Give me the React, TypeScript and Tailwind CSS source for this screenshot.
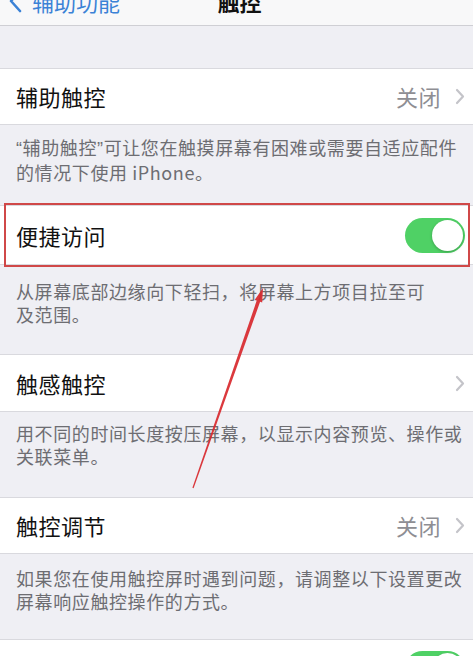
import React from 'react';

const FONT = { fontFamily: '"Noto Sans CJK SC", "Noto Sans", sans-serif' };

const Chevron = () => (
  <svg width="10" height="17" viewBox="0 0 10 17" className="ml-[14px]">
    <path d="M2 2 L8 8.5 L2 15" fill="none" stroke="#c4c4c9" strokeWidth="2.2" strokeLinecap="round" strokeLinejoin="round" />
  </svg>
);

const Toggle = () => (
  <div className="relative w-[60px] h-[35px] rounded-full bg-[#4fd165]">
    <div className="absolute right-[2px] top-[2px] w-[31px] h-[31px] rounded-full bg-white shadow-[0_1px_3px_rgba(0,0,0,0.25)]" />
  </div>
);

interface RowProps {
  label: string;
  value?: string;
  chevron?: boolean;
  toggle?: boolean;
  h?: string;
}

const Row: React.FC<RowProps> = ({ label, value, chevron, toggle, h = 'h-[57px]' }) => (
  <div className={`${h} bg-white border-y border-[#d9d9de] flex items-center pl-4 pr-[8px]`}>
    <span className="text-[22px] text-[#111] tracking-[0.5px] flex-1">{label}</span>
    {value && <span className="text-[22px] text-[#8e8e93] tracking-[0.5px]">{value}</span>}
    {chevron && <Chevron />}
    {toggle && <Toggle />}
  </div>
);

const Note: React.FC<{ lines: React.ReactNode[]; pt: string; h: string }> = ({ lines, pt, h }) => (
  <div className={`${h} ${pt} px-4 text-[18px] leading-[23px] text-[#6d6d72] tracking-[0.6px]`}>
    {lines.map((l, i) => (
      <div key={i} className="whitespace-nowrap">{l}</div>
    ))}
  </div>
);

const Q: React.FC<{ c: string }> = ({ c }) => (
  <span style={{ fontFamily: '"Liberation Sans", sans-serif' }}>{c}</span>
);

export default function App() {
  return (
    <div className="relative w-[473px] h-[656px] overflow-hidden bg-[#efeff4]" style={FONT}>
      {/* nav bar, cut at the top */}
      <div className="relative h-[26px] bg-[#f8f8f9] border-b border-[#cfcfd4] overflow-hidden">
        <div className="-mt-[14px] h-[30px] flex items-center pl-[8px]">
          <svg width="14" height="24" viewBox="0 0 14 24">
            <path d="M12 2 L3 12 L12 22" fill="none" stroke="#3b82d6" strokeWidth="2.6" strokeLinecap="round" strokeLinejoin="round" />
          </svg>
          <span className="ml-[10px] text-[22px] text-[#3b82d6]">辅助功能</span>
        </div>
        <div className="absolute left-0 right-0 -top-[14px] h-[30px] flex items-center justify-center">
          <span className="text-[22px] font-bold text-[#111] ml-[6px]">触控</span>
        </div>
      </div>

      <div className="h-[42px]" />

      <Row label="辅助触控" value="关闭" chevron />
      <Note
        h="h-[80px]"
        pt="pt-[11px]"
        lines={[
          <>
            <Q c="“" />辅助触控<Q c="”" />可让您在触摸屏幕有困难或需要自适应配件
          </>,
          '的情况下使用 iPhone。',
        ]}
      />

      <div className="relative">
        <Row label="便捷访问" toggle h="h-[60px]" />
        <div className="absolute -top-[2px] -bottom-[2px] left-[4px] right-[3px] border-2 border-[#d04848] pointer-events-none" />
      </div>
      <Note
        h="h-[89px]"
        pt="pt-[15px]"
        lines={['从屏幕底部边缘向下轻扫，将屏幕上方项目拉至可', '及范围。']}
      />

      <Row label="触感触控" chevron h="h-[58px]" />
      <Note
        h="h-[85px]"
        pt="pt-[10px]"
        lines={['用不同的时间长度按压屏幕，以显示内容预览、操作或', '关联菜单。']}
      />

      <Row label="触控调节" value="关闭" chevron />
      <Note
        h="h-[85px]"
        pt="pt-[13px]"
        lines={['如果您在使用触控屏时遇到问题，请调整以下设置更改', '屏幕响应触控操作的方式。']}
      />

      <div className="h-[57px] bg-white border-t border-[#d9d9de] flex items-start justify-end pr-[8px] pt-[11px]">
        <Toggle />
      </div>

      {/* red annotation arrow */}
      <svg className="absolute inset-0 pointer-events-none" width="473" height="656" viewBox="0 0 473 656">
        <polygon
          points="263,288 262.2,302.5 260.1,301.8 193.6,488.2 192.4,487.8 256.7,300.6 254.6,299.9"
          fill="#d8282c"
          fillOpacity="0.92"
        />
      </svg>
    </div>
  );
}
